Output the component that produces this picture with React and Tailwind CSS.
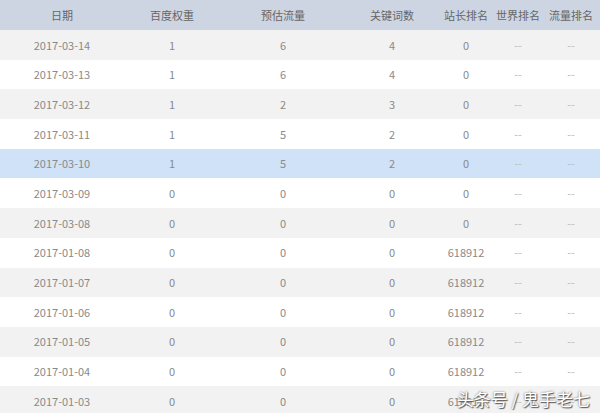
export default function App() {
  const rows = [
    ["2017-03-14","1","6","4","0","--","--"],
    ["2017-03-13","1","6","4","0","--","--"],
    ["2017-03-12","1","2","3","0","--","--"],
    ["2017-03-11","1","5","2","0","--","--"],
    ["2017-03-10","1","5","2","0","--","--"],
    ["2017-03-09","0","0","0","0","--","--"],
    ["2017-03-08","0","0","0","0","--","--"],
    ["2017-01-08","0","0","0","618912","--","--"],
    ["2017-01-07","0","0","0","618912","--","--"],
    ["2017-01-06","0","0","0","618912","--","--"],
    ["2017-01-05","0","0","0","618912","--","--"],
    ["2017-01-04","0","0","0","618912","--","--"],
    ["2017-01-03","0","0","0","618912","--","--"],
  ];
  const cols = "grid grid-cols-[124px_96px_126px_92px_56px_48px_58px]";
  const font = { fontFamily: '"Noto Sans CJK SC", "Liberation Sans", sans-serif' };
  return (
    <div className="relative w-[600px] h-[413px] overflow-hidden bg-white text-[11px]" style={font}>
      <div className={`${cols} h-[30px] items-center bg-[#cdd5e3] text-[#666]`}>
        {["日期","百度权重","预估流量","关键词数","站长排名","世界排名","流量排名"].map((h) => (
          <div key={h} className="text-center">{h}</div>
        ))}
      </div>
      {rows.map((r, i) => (
        <div key={i} className={`${cols} h-[29.7px] items-center text-[#8a8a8a] ${i === 4 ? "bg-[#cfe2f8]" : i % 2 === 0 ? "bg-[#f2f2f2]" : "bg-white"}`}>
          {r.map((c, j) => (
            <div key={j} className={`text-center ${c === "--" ? "text-[#bbb]" : ""}`}>{c}</div>
          ))}
        </div>
      ))}
      <div className="absolute right-[10px] bottom-[2px] text-[17px] text-white" style={{ textShadow: "0 0 2px #666, 1px 1px 1px #555" }}>
        头条号 / 鬼手老七
      </div>
    </div>
  );
}
